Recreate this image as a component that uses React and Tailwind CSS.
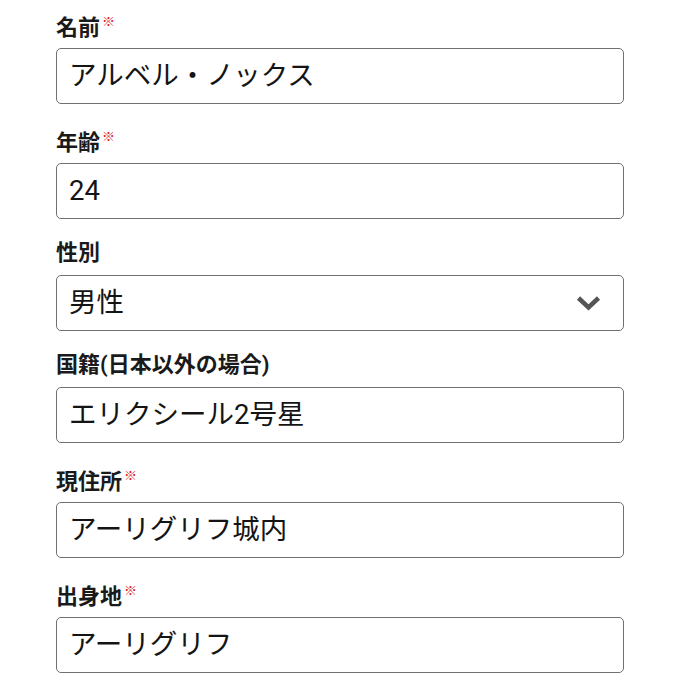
export default function App() {
  const fields = [
    { label: "名前", req: true, value: "アルベル・ノックス" },
    { label: "年齢", req: true, value: "24" },
    { label: "性別", req: false, value: "男性", select: true },
    { label: "国籍(日本以外の場合)", req: false, value: "エリクシール2号星" },
    { label: "現住所", req: true, value: "アーリグリフ城内" },
    { label: "出身地", req: true, value: "アーリグリフ" },
  ];
  return (
    <div
      className="w-[679px] h-[680px] bg-white overflow-hidden pt-[9px] pl-[56px]"
      style={{ fontFamily: 'Roboto, "Noto Sans CJK JP", sans-serif' }}
    >
      <div className="flex flex-col gap-[20px] w-[568px]">
        {fields.map((f) => (
          <div key={f.label} className="flex flex-col">
            <div
              className={`flex items-start text-[22px] leading-[28px] font-bold text-[#1a1a1a] ${
                f.req ? "pt-[5px] mb-[6px]" : "mb-[8px]"
              }`}
            >
              <span>{f.label}</span>
              {f.req && (
                <span className="ml-[2px] text-[13px] leading-[14px] text-[#dc2020] font-bold mt-[1px]">
                  ※
                </span>
              )}
            </div>
            <div className="h-[56px] border border-[#707070] rounded-[5px] flex items-center pl-[12px] pr-[22px] text-[27.5px] text-[#141414]">
              <span className="flex-1">{f.value}</span>
              {f.select && (
                <svg width="25" height="16" viewBox="0 0 25 16" className="text-[#555]">
                  <polyline
                    points="2.5,3 12.5,12.5 22.5,3"
                    fill="none"
                    stroke="currentColor"
                    strokeWidth="4.5"
                    strokeLinecap="butt"
                    strokeLinejoin="miter"
                  />
                </svg>
              )}
            </div>
          </div>
        ))}
      </div>
    </div>
  );
}
